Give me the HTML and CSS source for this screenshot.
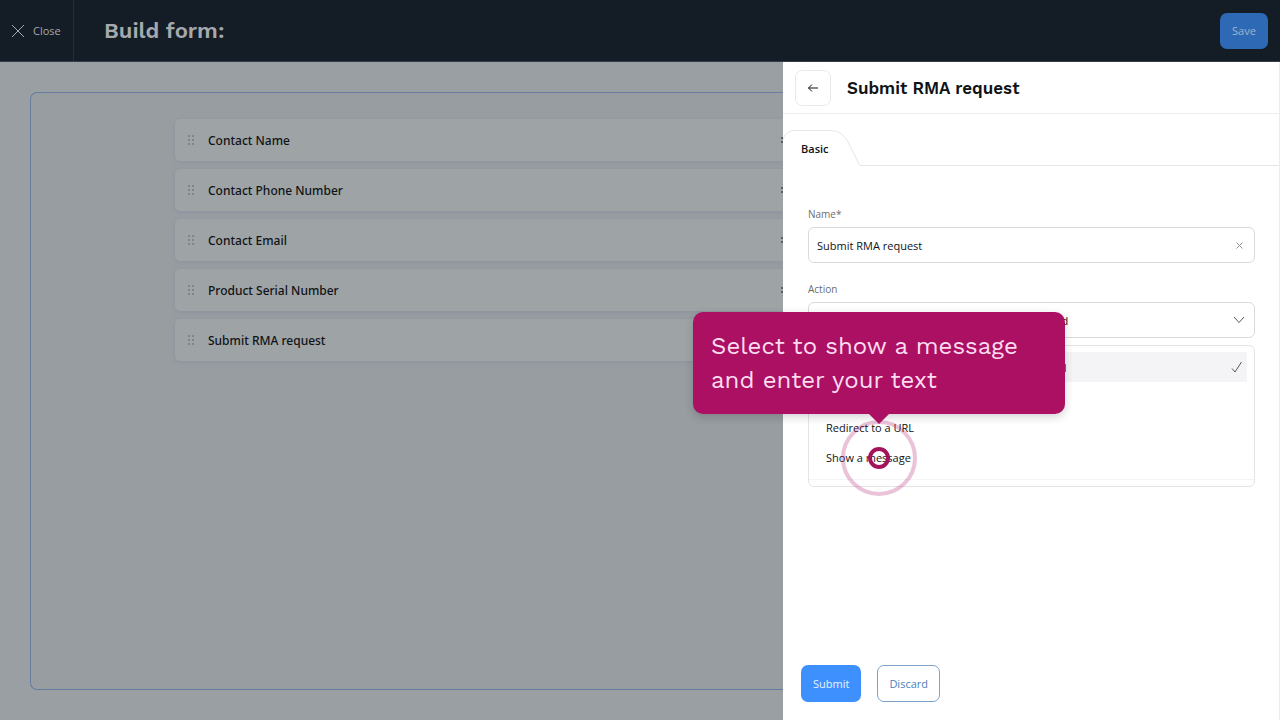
FILE: index.html
```html
<!DOCTYPE html>
<html lang="en">
<head>
  <meta charset="UTF-8" />
  <meta name="viewport" content="width=device-width, initial-scale=1" />
  <title>Build form</title>
  <link rel="stylesheet" href="styles.css">
</head>
<body>
  <header class="topbar">
    <button type="button" class="close-btn">
      <svg width="14" height="14" viewBox="0 0 14 14"><path d="M1 1l12 12M13 1L1 13" /></svg>
      Close
    </button>
    <h1>Build form:</h1>
    <button type="button" class="save-btn">Save</button>
  </header>

  <div class="workspace">
    <main class="canvas">
      <ul class="form-frame">
        <li class="form-row">
          <svg class="handle" width="8" height="10" viewBox="0 0 8 10"><path d="M1 0h2v2H1zM5 0h2v2H5zM1 4h2v2H1zM5 4h2v2H5zM1 8h2v2H1zM5 8h2v2H5z" /></svg>
          <span>Contact Name</span>
          <svg class="more" width="3" height="8" viewBox="0 0 3 8"><path d="M1 1h2v2H1zM1 5h2v2H1z" /></svg>
        </li>
        <li class="form-row">
          <svg class="handle" width="8" height="10" viewBox="0 0 8 10"><path d="M1 0h2v2H1zM5 0h2v2H5zM1 4h2v2H1zM5 4h2v2H5zM1 8h2v2H1zM5 8h2v2H5z" /></svg>
          <span>Contact Phone Number</span>
          <svg class="more" width="3" height="8" viewBox="0 0 3 8"><path d="M1 1h2v2H1zM1 5h2v2H1z" /></svg>
        </li>
        <li class="form-row">
          <svg class="handle" width="8" height="10" viewBox="0 0 8 10"><path d="M1 0h2v2H1zM5 0h2v2H5zM1 4h2v2H1zM5 4h2v2H5zM1 8h2v2H1zM5 8h2v2H5z" /></svg>
          <span>Contact Email</span>
          <svg class="more" width="3" height="8" viewBox="0 0 3 8"><path d="M1 1h2v2H1zM1 5h2v2H1z" /></svg>
        </li>
        <li class="form-row">
          <svg class="handle" width="8" height="10" viewBox="0 0 8 10"><path d="M1 0h2v2H1zM5 0h2v2H5zM1 4h2v2H1zM5 4h2v2H5zM1 8h2v2H1zM5 8h2v2H5z" /></svg>
          <span>Product Serial Number</span>
          <svg class="more" width="3" height="8" viewBox="0 0 3 8"><path d="M1 1h2v2H1zM1 5h2v2H1z" /></svg>
        </li>
        <li class="form-row">
          <svg class="handle" width="8" height="10" viewBox="0 0 8 10"><path d="M1 0h2v2H1zM5 0h2v2H5zM1 4h2v2H1zM5 4h2v2H5zM1 8h2v2H1zM5 8h2v2H5z" /></svg>
          <span>Submit RMA request</span>
        </li>
      </ul>
    </main>

    <aside class="panel">
      <div class="panel-head">
        <button type="button" class="back-btn" aria-label="Back">
          <svg width="12" height="10" viewBox="0 0 12 10"><path d="M11 5H1.500M5 1.500L1.500 5L5 8.500" /></svg>
        </button>
        <h2>Submit RMA request</h2>
      </div>

      <nav class="tabs">
        <a href="#basic" class="tab">
          <svg class="tab-shape" width="78" height="36" viewBox="0 0 78 36"><path d="M0 10Q2 .5 12 .5H47C56 .5 61 5 65 12L74 30Q76 35.500 78 35.500" /></svg>
          Basic
        </a>
        <div class="tab-line"></div>
      </nav>

      <form class="panel-form" id="basic">
        <label for="name">Name*</label>
        <div class="field">
          <input type="text" id="name" value="Submit RMA request">
          <button type="button" class="clear-btn" aria-label="Clear">
            <svg width="7" height="7" viewBox="0 0 7 7"><path d="M.5 .5l6 6M6.500 .5l-6 6" /></svg>
          </button>
        </div>

        <label for="action">Action</label>
        <div class="field">
          <select id="action">
            <option>Redirect to the details page of the created record</option>
            <option>Redirect to a page</option>
            <option>Redirect to a URL</option>
            <option>Show a message</option>
          </select>
          <svg class="chevron" width="12" height="8" viewBox="0 0 12 8"><path d="M1 1l5 5.500L11 1" /></svg>

          <ul class="menu">
            <li class="option selected">
              <button type="button">Redirect to the details page of a created record</button>
              <svg class="check" width="12" height="12" viewBox="0 0 12 12"><path d="M1 7.500L4 11L10.500 1" /></svg>
            </li>
            <li class="option"><button type="button">Redirect to a page</button></li>
            <li class="option"><button type="button">Redirect to a URL</button></li>
            <li class="option">
              <button type="button">Show a message</button>
              <div class="callout">Select to show a message and enter your text</div>
              <div class="pulse"></div>
            </li>
          </ul>
        </div>
      </form>

      <div class="panel-actions">
        <button type="submit" form="basic" class="submit-btn">Submit</button>
        <button type="button" class="discard-btn">Discard</button>
      </div>
    </aside>
  </div>
</body>
</html>
```

FILE: styles.css
```css
*,
*::before,
*::after {
  box-sizing: border-box;
}

body {
  margin: 0;
  min-height: 100vh;
  display: flex;
  flex-direction: column;
  font-family: 'Open Sans', 'Noto Sans', sans-serif;
  font-size: 11px;
  color: #101316;
  background: #999fa2;
}

h1, h2, ul {
  margin: 0;
  padding: 0;
}

ul {
  list-style: none;
}

button, input, select {
  font: inherit;
  color: inherit;
  cursor: pointer;
}

svg {
  display: block;
  flex: none;
  fill: none;
  stroke: currentColor;
}

/* top bar */
.topbar {
  display: flex;
  align-items: center;
  height: 62px;
  padding-right: 12px;
  background: #141c26;
  border-bottom: 1px solid #343d49;
}

.close-btn {
  display: flex;
  align-items: center;
  gap: 8px;
  align-self: stretch;
  width: 74px;
  padding: 0 0 0 11px;
  font-weight: 500;
  color: #a3a8ad;
  background: none;
  border: none;
  border-right: 1px solid #1d2f47;
}

h1 {
  flex: 1;
  padding-left: 30px;
  font-family: 'Work Sans', Inter, sans-serif;
  font-size: 22px;
  font-weight: 600;
  color: #a5a9ad;
}

.save-btn {
  width: 48px;
  height: 36px;
  padding: 0;
  color: #a3b4cb;
  background: #2d69b5;
  border: none;
  border-radius: 7px;
}

.workspace {
  flex: 1;
  display: grid;
  grid-template-columns: minmax(0, 1fr) 497px;
}

/* form canvas */
.canvas {
  display: flex;
  padding: 30px 0 30px 30px;
  overflow: hidden;
}

.form-frame {
  flex: 1;
  display: flex;
  flex-direction: column;
  gap: 8px;
  padding: 26px 0 26px 144px;
  background: #979da1;
  border: 1px solid #667d9f;
  border-right: none;
  border-radius: 7px 0 0 7px;
}

.form-row {
  display: flex;
  align-items: center;
  gap: 13px;
  height: 42px;
  padding-left: 12px;
  font-family: 'Noto Sans', 'Open Sans', sans-serif;
  font-size: 12px;
  font-weight: 500;
  background: #9ea4a6;
  border-radius: 5px 0 0 5px;
  box-shadow: 0 1px 4px #8b929f;
}

.handle {
  fill: #7f858a;
  stroke: none;
}

.more {
  margin-left: auto;
  fill: #5a6068;
  stroke: none;
}

/* side panel */
.panel {
  position: relative;
  display: flex;
  flex-direction: column;
  background: #fff;
  border-right: 1px solid #ececec;
}

.panel-head {
  display: flex;
  align-items: center;
  gap: 16px;
  height: 52px;
  padding-left: 12px;
  border-bottom: 1px solid #ededee;
}

.back-btn {
  display: grid;
  place-items: center;
  width: 36px;
  height: 36px;
  padding: 0;
  background: #fff;
  border: 1px solid #e9e9eb;
  border-radius: 7px;
}

h2 {
  font-family: 'Work Sans', Inter, sans-serif;
  font-size: 17px;
  font-weight: 600;
}

.tabs {
  display: flex;
  margin-top: 16px;
}

.tab {
  position: relative;
  display: flex;
  align-items: center;
  width: 78px;
  height: 36px;
  padding-left: 18px;
  font-weight: 600;
  color: inherit;
  text-decoration: none;
}

.tab-shape {
  position: absolute;
  inset: 0;
  color: #e6e6e8;
}

.tab-line {
  flex: 1;
  border-bottom: 1px solid #e6e6e8;
}

.panel-form {
  flex: 1;
  padding: 40px 24px 0 25px;
}

.panel-form label {
  display: block;
  font-size: 10px;
  line-height: 16px;
  margin-bottom: 5px;
  color: #6b6d70;
}

.field {
  position: relative;
  margin-bottom: 18px;
}

.field input,
.field select {
  display: block;
  width: 100%;
  height: 36px;
  padding: 0 32px 0 8px;
  background: #fff;
  border: 1px solid #d9dadd;
  border-radius: 6px;
  appearance: none;
}

.clear-btn {
  position: absolute;
  top: 10px;
  right: 8px;
  display: grid;
  place-items: center;
  width: 16px;
  height: 16px;
  padding: 0;
  color: #8f9195;
  background: none;
  border: none;
}

.chevron {
  position: absolute;
  top: 14px;
  right: 10px;
  color: #55585c;
}

.menu {
  position: absolute;
  top: 43px;
  left: 0;
  right: 0;
  padding: 6px 7px 14px;
  background: #fff;
  border: 1px solid #e4e4e7;
  border-radius: 6px;
}

.menu::after {
  content: '';
  position: absolute;
  left: 0;
  right: 0;
  bottom: 6px;
  border-bottom: 1px solid #f4f4f6;
}

.option {
  position: relative;
  display: flex;
  align-items: center;
  height: 30px;
}

.option button {
  flex: 1;
  height: 100%;
  padding: 0 0 0 10px;
  text-align: left;
  background: none;
  border: none;
}

.option.selected {
  background: #f4f4f6;
}

.check {
  margin-right: 4px;
  color: #55585c;
}

/* guide callout and click marker */
.callout {
  position: absolute;
  z-index: 2;
  bottom: calc(100% + 28px);
  left: -123px;
  width: 372px;
  padding: 17px 18px;
  font-family: 'Work Sans', Inter, sans-serif;
  font-size: 24px;
  line-height: 34px;
  color: #fbdcf0;
  background: #ab1062;
  border-radius: 10px;
  box-shadow: 0 3px 8px rgba(40, 20, 40, 0.2);
}

.callout::after {
  content: '';
  position: absolute;
  top: 100%;
  left: 50%;
  margin-left: -10px;
  border: 10px solid transparent;
  border-top-color: #ab1062;
  border-bottom: none;
}

.pulse {
  position: absolute;
  z-index: 1;
  top: -22px;
  left: 25px;
  display: grid;
  place-items: center;
  width: 76px;
  height: 76px;
  border: 4px solid rgba(171, 16, 98, 0.25);
  border-radius: 50%;
}

.pulse::after {
  content: '';
  width: 22px;
  height: 22px;
  border: 4px solid #a3125b;
  border-radius: 50%;
}

.panel-actions {
  display: flex;
  gap: 16px;
  padding: 0 18px 18px;
}

.submit-btn,
.discard-btn {
  height: 37px;
  border-radius: 7px;
}

.submit-btn {
  padding: 0 12px;
  font-weight: 500;
  color: #e9f3ff;
  background: #3f90ff;
  border: none;
}

.discard-btn {
  padding: 0 11px;
  color: #4c7fb8;
  background: #fff;
  border: 1px solid #7ea3c9;
}
```
